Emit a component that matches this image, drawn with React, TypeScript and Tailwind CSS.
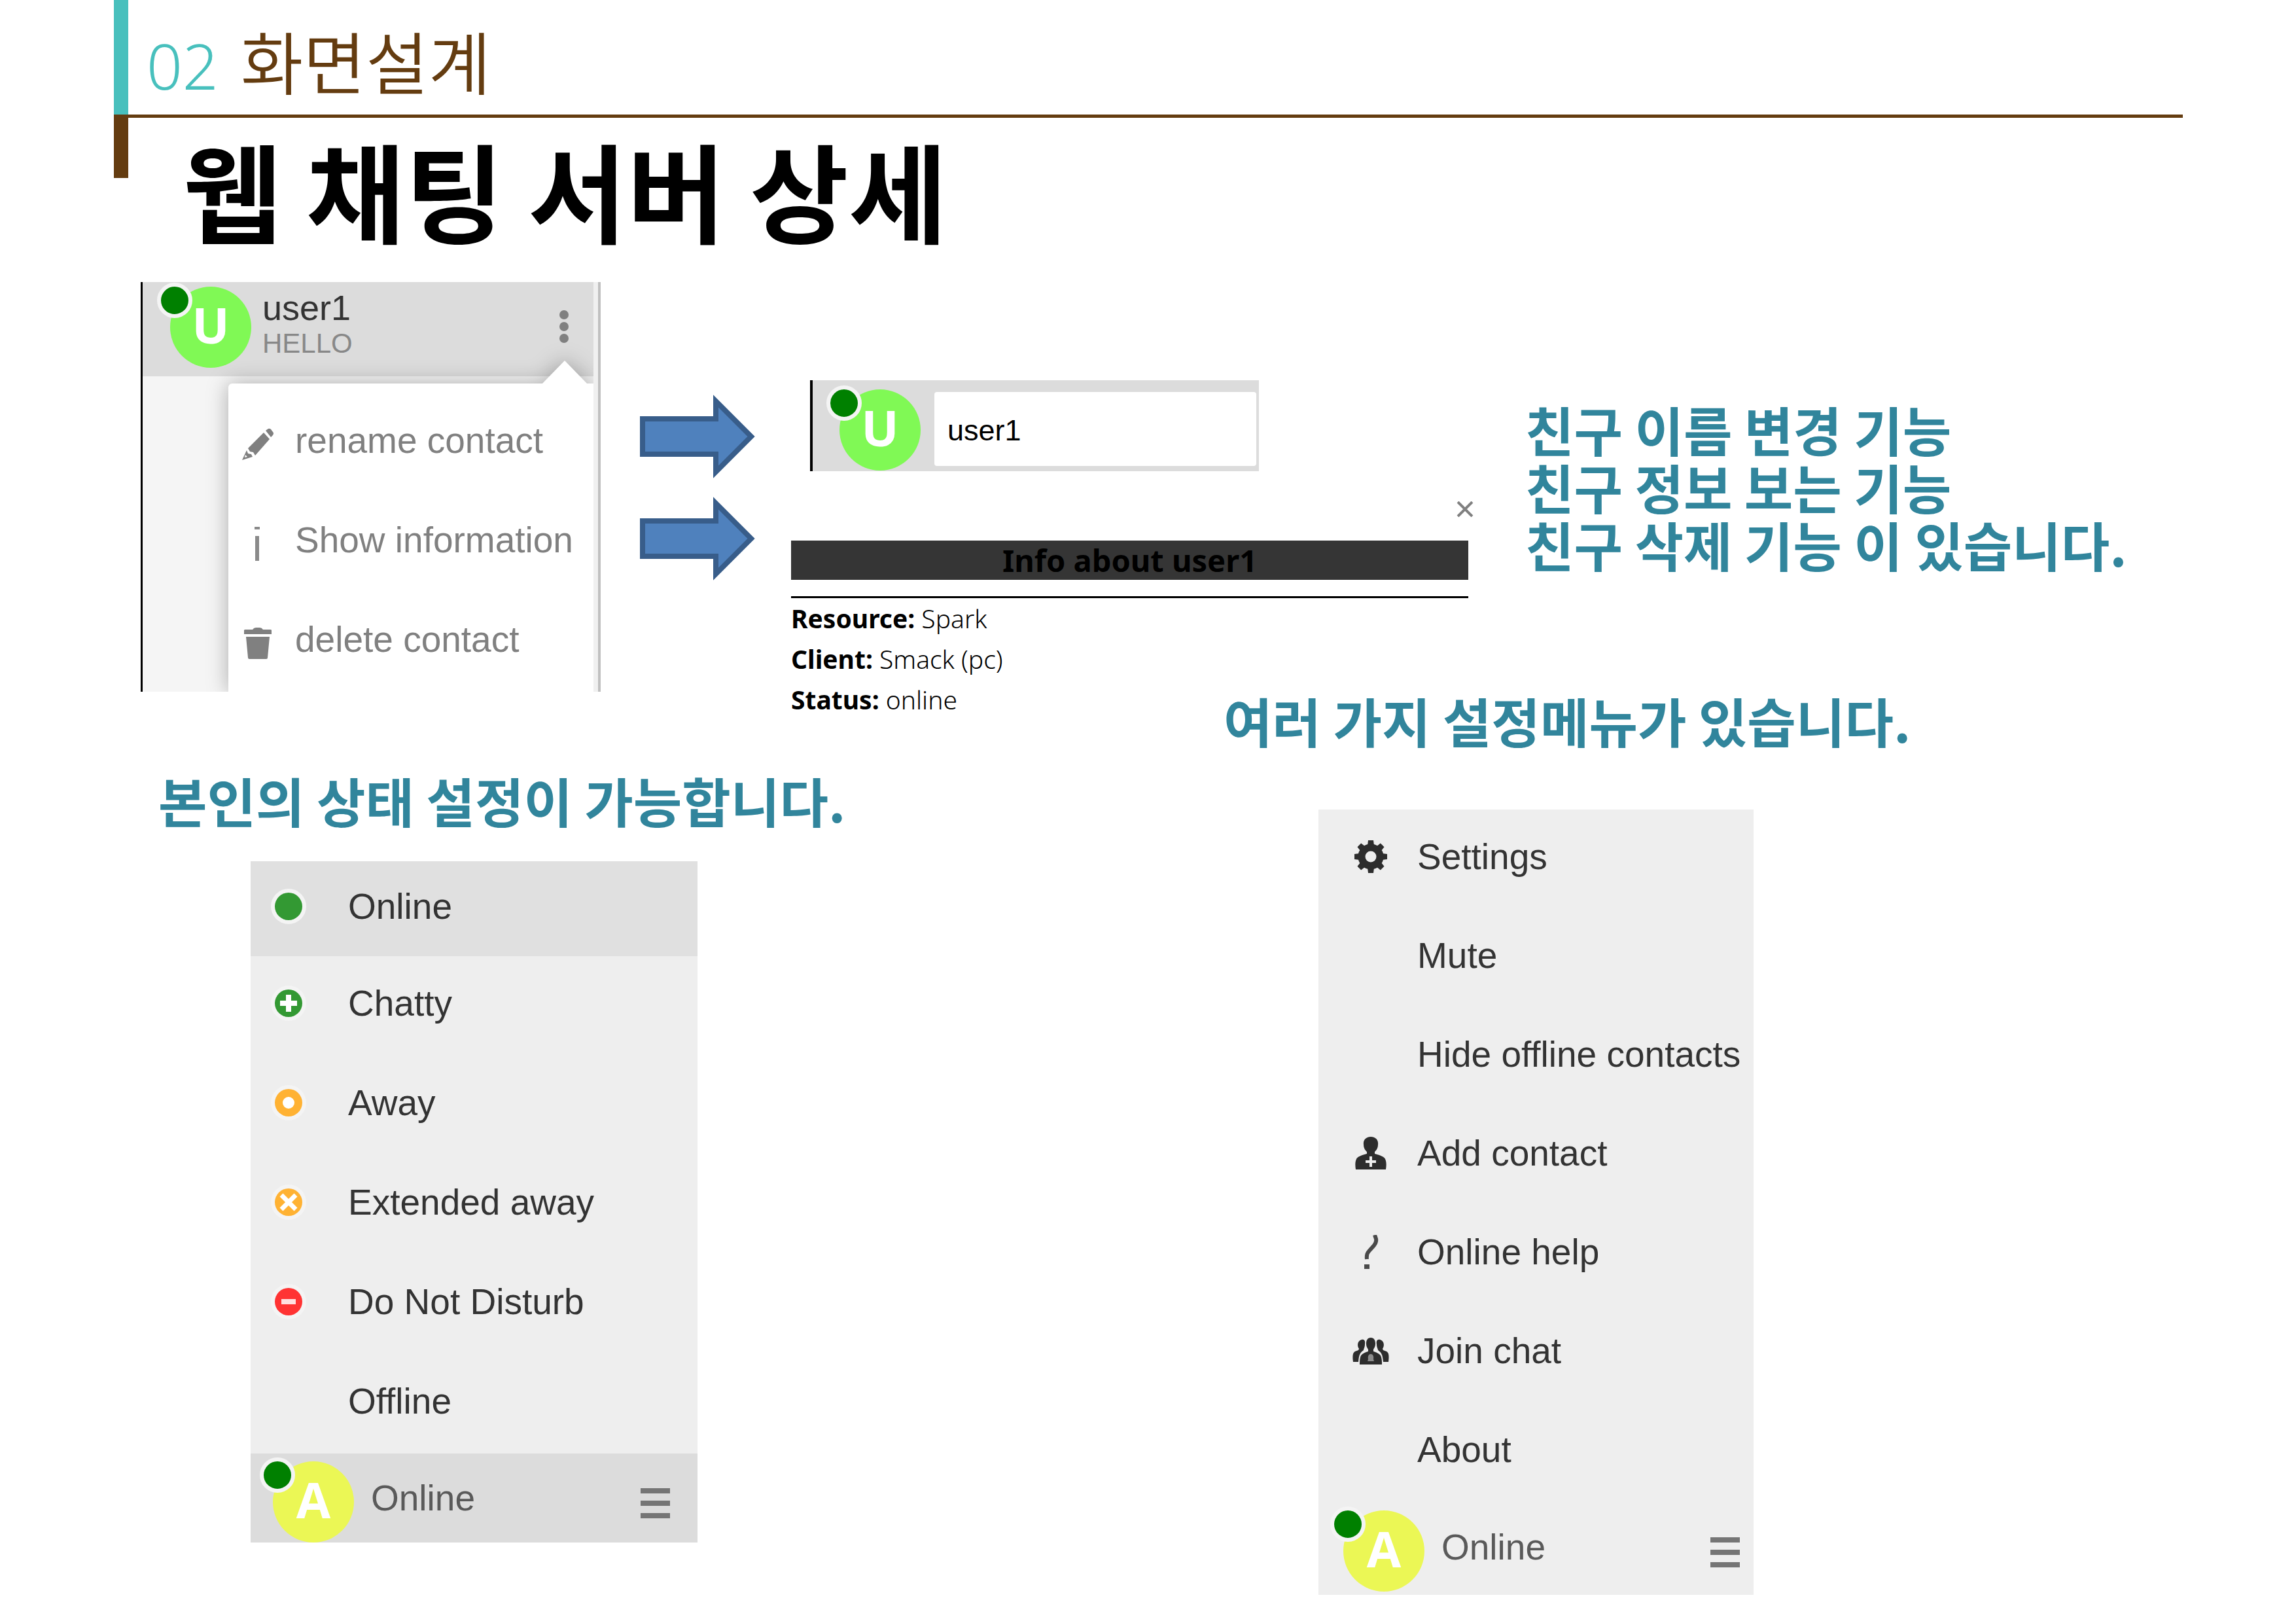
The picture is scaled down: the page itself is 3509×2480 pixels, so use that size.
import type { ReactNode } from "react";

const KR = "font-['Noto_Sans_CJK_KR',sans-serif]";
const UI = "font-['Liberation_Sans',Arial,sans-serif]";
const INFO = "font-['Noto_Sans','Noto_Sans_CJK_KR',sans-serif]";

function Avatar({ letter, color }: { letter: string; color: string }) {
  return (
    <div className={`relative flex size-[124px] shrink-0 items-center justify-center rounded-full pb-2 ${color}`}>
      <span className="font-['Open_Sans',sans-serif] text-[76px] leading-[80px] font-bold text-white">{letter}</span>
      <span className="absolute -top-[6px] -left-[20px] size-[54px] rounded-full border-[6px] border-[#f4f4f4] bg-[#008000]" />
    </div>
  );
}

function BlockArrow() {
  return (
    <svg viewBox="0 0 176 128" className="h-[128px] w-[176px]" aria-hidden="true">
      <path d="M4 37H116V10L170 64L116 118V91H4Z" fill="#4f81bd" stroke="#385d8a" strokeWidth="8" />
    </svg>
  );
}

function MenuBars() {
  return (
    <button aria-label="Menu" className="mt-[41px] ml-auto flex h-[46px] w-[45px] flex-col justify-between">
      <span className="h-[8px] w-full bg-[#757575]" />
      <span className="h-[8px] w-full bg-[#757575]" />
      <span className="h-[8px] w-full bg-[#757575]" />
    </button>
  );
}

function PencilIcon() {
  return (
    <svg viewBox="0 0 48 48" className="size-[48px]" fill="#808080" aria-hidden="true">
      <path d="M36 3L40 0Q42-1 44 1L47 5Q49 7 47 10L44 13Z" />
      <path d="M33 6L42 16L20 41L17 36L12 35L9 30Z" />
      <path d="M7 33L9 38L14 39L16 43L0 48ZM5 40L4 44L8 43Z" fillRule="evenodd" />
    </svg>
  );
}

function InfoIcon() {
  return (
    <svg viewBox="0 0 48 52" className="h-[52px] w-[48px]" stroke="#8a8a8a" aria-hidden="true">
      <path d="M23 0V4" strokeWidth="8" />
      <path d="M23 14V52" strokeWidth="6" />
    </svg>
  );
}

function TrashIcon() {
  return (
    <svg viewBox="0 0 48 48" className="size-[48px]" fill="#808080" aria-hidden="true">
      <path d="M3 4Q3 3 5 3H16Q18 0 21 0H27Q30 0 32 3H43Q45 3 45 4V10H3Z" />
      <path d="M6 14H42L39 46Q39 48 37 48H11Q9 48 9 46Z" />
    </svg>
  );
}

function GearIcon() {
  return (
    <svg viewBox="-26 -26 52 52" className="size-[52px]" aria-hidden="true">
      <circle r="14" fill="none" stroke="#2d2d2d" strokeWidth="11" />
      {[0, 45, 90, 135, 180, 225, 270, 315].map((a) => (
        <path key={a} d="M-5 -17L-4 -25H4L5 -17Z" fill="#2d2d2d" transform={`rotate(${a})`} />
      ))}
    </svg>
  );
}

function AddContactIcon() {
  return (
    <svg viewBox="0 0 48 50" className="h-[50px] w-[48px]" aria-hidden="true">
      <path
        d="M24 0C31 0 36 5 35 12C35 18 32 21 30 23V26C37 28 44 30 46 34C48 38 48 44 47 50H1C0 44 0 38 2 34C4 30 11 28 18 26V23C16 21 13 18 13 12C12 5 17 0 24 0Z"
        fill="#2d2d2d"
      />
      <path d="M24 30V46M16 38H32" stroke="#eeeeee" strokeWidth="4" />
    </svg>
  );
}

function HelpIcon() {
  return (
    <svg viewBox="0 0 24 52" className="h-[52px] w-[24px]" fill="none" stroke="#4a4a4a" strokeWidth="6" aria-hidden="true">
      <path d="M18 0L20 6Q21 11 17 16L9 25Q5 29 6 37" />
      <path d="M6 45V52" strokeWidth="8" />
    </svg>
  );
}

function GroupIcon() {
  return (
    <svg viewBox="0 0 56 42" className="h-[42px] w-[56px]" fill="#2d2d2d" aria-hidden="true">
      <path d="M14 4C18 3 20 6 19 11C19 16 17 18 17 20C12 24 10 26 9 38H1C0 30 0 24 4 22C7 21 10 20 10 18C7 14 7 6 14 4Z" />
      <path d="M42 4C38 3 36 6 37 11C37 16 39 18 39 20C44 24 46 26 47 38H55C56 30 56 24 52 22C49 21 46 20 46 18C49 14 49 6 42 4Z" />
      <path d="M28 1C33 1 35 5 35 10C35 15 33 17 32 19V22C38 24 43 26 44 31C45 35 45 38 45 42H11C11 38 11 35 12 31C13 26 18 24 24 22V19C23 17 21 15 21 10C21 5 23 1 28 1Z" />
      <path d="M28 26C31 26 33 29 32 34L33 37H23L24 34C23 29 25 26 28 26Z" fill="#8c8c8c" />
    </svg>
  );
}

function StatusIcon({ fill, children }: { fill: string; children?: ReactNode }) {
  return (
    <svg viewBox="-27 -27 54 54" className="size-[54px]" aria-hidden="true">
      <circle r="27" fill="#f4f4f4" />
      <circle r="21" fill={fill} />
      {children}
    </svg>
  );
}

const contactActions = [
  { label: "rename contact", icon: <PencilIcon /> },
  { label: "Show information", icon: <InfoIcon /> },
  { label: "delete contact", icon: <TrashIcon /> },
];

const statuses = [
  { label: "Online", icon: <StatusIcon fill="#339933" /> },
  {
    label: "Chatty",
    icon: (
      <StatusIcon fill="#339933">
        <path d="M-13 0H13M0 -13V13" stroke="#fff" strokeWidth="8" />
      </StatusIcon>
    ),
  },
  {
    label: "Away",
    icon: (
      <StatusIcon fill="#ffb233">
        <circle r="9" fill="#fff" />
      </StatusIcon>
    ),
  },
  {
    label: "Extended away",
    icon: (
      <StatusIcon fill="#ffb233">
        <path d="M-11 -11L11 11M-11 11L11 -11" stroke="#fff" strokeWidth="7" />
      </StatusIcon>
    ),
  },
  {
    label: "Do Not Disturb",
    icon: (
      <StatusIcon fill="#ff3333">
        <path d="M-11 0H11" stroke="#ffe0e0" strokeWidth="8" />
      </StatusIcon>
    ),
  },
  { label: "Offline", icon: null },
];

const settings = [
  { label: "Settings", icon: <GearIcon /> },
  { label: "Mute", icon: null },
  { label: "Hide offline contacts", icon: null },
  { label: "Add contact", icon: <AddContactIcon /> },
  { label: "Online help", icon: <HelpIcon /> },
  { label: "Join chat", icon: <GroupIcon /> },
  { label: "About", icon: null },
];

function Header() {
  return (
    <header className="flex items-start pl-[174px]">
      <div className="w-[22px] shrink-0">
        <div className="h-[175px] bg-[#48c0bd]" />
        <div className="h-[97px] bg-[#643c10]" />
      </div>
      <div className="min-w-0 flex-1">
        <div className="mr-[173px] flex h-[180px] items-baseline gap-[34px] border-b-[5px] border-[#643c10] pt-[32px] pl-[28px]">
          <span className="font-['Noto_Sans',sans-serif] text-[96px] leading-[120px] font-[350] text-[#48c0bd]">02</span>
          <h2 className={`text-[104px] leading-[120px] font-[350] text-[#643c10] ${KR}`}>화면설계</h2>
        </div>
        <h1 className={`mt-4 pl-[84px] text-[164px] leading-[184px] font-bold text-black ${KR}`}>웹 채팅 서버 상세</h1>
      </div>
    </header>
  );
}

function ContactPanel() {
  return (
    <section className={`min-w-0 self-start border-r-4 border-l-[3px] border-r-[#c0c0c0] border-l-black ${UI}`}>
      <div className="overflow-hidden border-r-[7px] border-[#f0f0f0] bg-[#f5f5f5]">
        <div className="flex h-[144px] items-start bg-[#dcdcdc] pt-[7px] pr-[38px] pl-[42px]">
          <Avatar letter="U" color="bg-[#80f955]" />
          <div className="mt-[2px] ml-[17px]">
            <p className="text-[54px] leading-[60px] text-[#333]">user1</p>
            <p className="text-[42px] leading-[50px] text-[#888]">HELLO</p>
          </div>
          <button aria-label="Contact options" className="mt-[36px] ml-auto flex flex-col gap-1">
            <span className="size-[14px] rounded-full bg-[#808080]" />
            <span className="size-[14px] rounded-full bg-[#808080]" />
            <span className="size-[14px] rounded-full bg-[#808080]" />
          </button>
        </div>
        <div className="pt-[11px] pl-[131px]">
          <div className="relative rounded-tl-[6px] bg-white pt-[11px] drop-shadow-[0_0_16px_rgba(0,0,0,0.3)]">
            <svg viewBox="0 0 70 36" className="absolute -top-[35px] right-[9px] h-[36px] w-[70px]" aria-hidden="true">
              <path d="M0 36L35 0L70 36Z" fill="#fff" />
            </svg>
            <ul className="pb-1">
              {contactActions.map((a) => (
                <li key={a.label}>
                  <button className="flex h-[152px] w-full items-center pl-[21px] text-left text-[55px] leading-[64px] whitespace-nowrap text-[#808080]">
                    <span className="mt-3 mr-[33px] flex w-[48px] justify-center">{a.icon}</span>
                    {a.label}
                  </button>
                </li>
              ))}
            </ul>
          </div>
        </div>
      </div>
    </section>
  );
}

function RenameEditor() {
  return (
    <div className={`mr-[411px] ml-[30px] flex h-[139px] items-start overflow-hidden border-l-4 border-black bg-[#dcdcdc] pt-[14px] pr-1 pl-[41px] ${UI}`}>
      <Avatar letter="U" color="bg-[#80f955]" />
      <input
        aria-label="Contact name"
        defaultValue="user1"
        className="mt-1 ml-[21px] h-[113px] min-w-0 flex-1 rounded-[4px] bg-white pt-1 pl-5 text-[45px] text-black"
      />
    </div>
  );
}

function InfoDialog() {
  return (
    <div className={`mt-[46px] mr-[83px] ml-px flex flex-col ${INFO}`}>
      <button aria-label="Close" className="self-end">
        <svg viewBox="0 0 26 24" className="h-[24px] w-[26px]" aria-hidden="true">
          <path d="M2 1L24 23M24 1L2 23" stroke="#808080" strokeWidth="4" />
        </svg>
      </button>
      <div className="mt-[36px] mr-2">
        <h3 className="bg-[#353535] text-center text-[47px] leading-[60px] font-bold text-black">Info about user1</h3>
        <div className="mt-[25px] border-t-[3px] border-black text-[39px] leading-[62px] font-[350] text-black">
          <p>
            <b className="font-bold">Resource:</b> Spark
          </p>
          <p>
            <b className="font-bold">Client:</b> Smack (pc)
          </p>
          <p>
            <b className="font-bold">Status:</b> online
          </p>
        </div>
      </div>
    </div>
  );
}

function StatusPanel() {
  return (
    <section className={`mt-[50px] ml-[141px] w-[683px] bg-[#eeeeee] ${UI}`}>
      <ul>
        {statuses.map((s, i) => (
          <li key={s.label}>
            <button
              className={`flex w-full items-center pb-2 pl-[31px] text-left text-[55px] leading-[64px] text-[#333] ${
                i === 0 ? "h-[145px] bg-[#e0e0e0]" : "h-[152px]"
              }`}
            >
              <span className="mr-16 w-[54px]">{s.icon}</span>
              {s.label}
            </button>
          </li>
        ))}
      </ul>
      <div className="flex h-[136px] items-start bg-[#dcdcdc] pt-3 pr-[42px] pl-[34px]">
        <Avatar letter="A" color="bg-[#ebf755]" />
        <p className="mt-6 ml-[26px] text-[55px] leading-[64px] text-[#5a5a5a]">Online</p>
        <MenuBars />
      </div>
    </section>
  );
}

function SettingsPanel() {
  return (
    <section className={`mt-[93px] ml-[145px] w-[665px] bg-[#eeeeee] ${UI}`}>
      <ul>
        {settings.map((s) => (
          <li key={s.label}>
            <button className="flex h-[151px] w-full items-center pb-2 pl-[52px] text-left text-[55px] leading-[64px] whitespace-nowrap text-[#333]">
              <span className="mr-[43px] flex w-[56px] justify-center">{s.icon}</span>
              {s.label}
            </button>
          </li>
        ))}
      </ul>
      <div className="flex h-[143px] items-start pt-[14px] pr-[21px] pl-[38px]">
        <Avatar letter="A" color="bg-[#ebf755]" />
        <p className="mt-6 ml-[26px] text-[55px] leading-[64px] text-[#5a5a5a]">Online</p>
        <MenuBars />
      </div>
    </section>
  );
}

export default function App() {
  return (
    <main className="min-h-screen bg-white">
      <Header />
      <div className="mt-[51px] grid grid-cols-[703fr_290fr_1123fr_1178fr] pl-[215px]">
        <ContactPanel />
        <div className="flex flex-col gap-[28px] pt-[172px] pl-[60px]">
          <BlockArrow />
          <BlockArrow />
        </div>
        <div className="-mr-1 min-w-0 pt-[150px]">
          <RenameEditor />
          <InfoDialog />
        </div>
        <div className={`min-w-0 pt-[180px] text-[81px] leading-[88px] font-bold whitespace-nowrap text-[#31859c] ${KR}`}>
          <p>친구 이름 변경 기능</p>
          <p>친구 정보 보는 기능</p>
          <p>친구 삭제 기능 이 있습니다.</p>
        </div>
      </div>
      <div className="grid grid-cols-[1628fr_1639fr] pl-[242px]">
        <div className="pt-[78px]">
          <p className={`text-[81px] leading-[88px] font-bold whitespace-nowrap text-[#31859c] ${KR}`}>
            본인의 상태 설정이 가능합니다.
          </p>
          <StatusPanel />
        </div>
        <div className="-mt-[44px]">
          <p className={`text-[81px] leading-[88px] font-bold whitespace-nowrap text-[#31859c] ${KR}`}>
            여러 가지 설정메뉴가 있습니다.
          </p>
          <SettingsPanel />
        </div>
      </div>
    </main>
  );
}
